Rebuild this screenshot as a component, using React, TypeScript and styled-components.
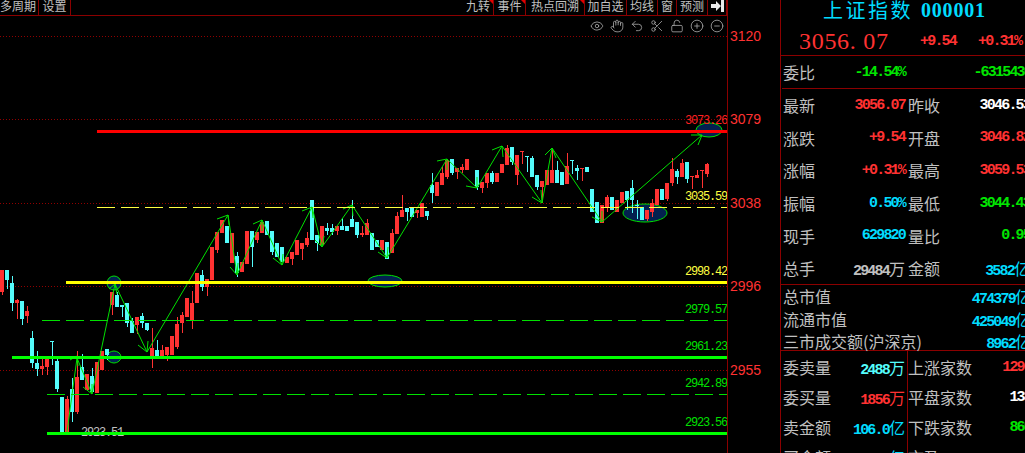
import React, { FC } from 'react';
import styled, { createGlobalStyle } from 'styled-components';
import { CircleMinus, CirclePlus, Eye, Hand, LockOpen, Scissors, Undo2 } from 'lucide-react';

const CJK = '"Noto Sans CJK SC", "Noto Sans", sans-serif';
const RED = '#ff3232';
const GREEN = '#00e600';
const CYAN = '#00dcff';
const AQUA = '#54fcfc';
const GREY = '#c0c0c0';
const LINE = '#8b0000';

const GlobalStyle = createGlobalStyle`
  html, body {
    margin: 0;
    height: 100%;
    background: #000;
    overflow: hidden;
  }
`;

const Page = styled.div`
  display: flex;
  width: 1025px;
  height: 453px;
  background: #000;
  overflow: hidden;
  font-family: ${CJK};
`;

const ChartPane = styled.div`
  position: relative;
  display: flex;
  flex-direction: column;
  width: 727px;
  flex: none;
`;

const Toolbar = styled.div`
  display: flex;
  justify-content: space-between;
  height: 15px;
  flex: none;
  border-bottom: 1px solid ${LINE};
  overflow: hidden;
`;

const ToolGroup = styled.div`
  display: flex;
  &:first-child {
    margin-left: -2px;
  }
`;

const ToolButton = styled.div<{ $width: number; $flag?: boolean }>`
  position: relative;
  width: ${(p) => p.$width}px;
  height: 15px;
  box-sizing: border-box;
  border-right: 1px solid ${LINE};
  display: flex;
  justify-content: center;
  align-items: flex-start;
  color: ${GREY};
  font-size: 12px;
  line-height: 12px;
  white-space: nowrap;
  &::after {
    content: '';
    display: ${(p) => (p.$flag ? 'block' : 'none')};
    position: absolute;
    top: 0;
    right: 0;
    border-top: 4px solid #e00000;
    border-left: 4px solid transparent;
  }
`;

const ExitIcon = styled.svg`
  width: 13px;
  height: 12px;
  display: block;
`;

const ChartSvg = styled.svg`
  display: block;
  width: 727px;
  height: 437px;
  flex: none;
`;

const ChartNote = styled.text`
  fill: #c0c0c0;
  font-family: 'Liberation Mono', monospace;
  font-size: 12px;
  letter-spacing: -1.2px;
`;

const IconRow = styled.div`
  position: absolute;
  top: 19px;
  right: 3px;
  display: flex;
  gap: 6px;
  color: #a8a8a8;
`;

const PriceTag = styled.span<{ $top: number; $left: number; $color: string }>`
  position: absolute;
  top: ${(p) => p.$top}px;
  left: ${(p) => p.$left}px;
  color: ${(p) => p.$color};
  font-family: 'Liberation Mono', monospace;
  font-size: 12px;
  line-height: 12px;
  letter-spacing: -1.2px;
`;

const AxisPane = styled.div`
  position: relative;
  width: 54px;
  flex: none;
  box-sizing: border-box;
  border-left: 1px solid ${LINE};
  border-right: 1px solid ${LINE};
`;

const AxisLabel = styled.span<{ $top: number }>`
  position: absolute;
  left: 2px;
  top: ${(p) => p.$top - 8}px;
  color: ${RED};
  font-family: 'Liberation Sans', sans-serif;
  font-size: 14px;
  line-height: 16px;
`;

const QuotePane = styled.div`
  flex: 1;
  min-width: 0;
  display: flex;
  flex-direction: column;
  overflow: hidden;
`;

const Title = styled.div`
  flex: none;
  height: 19px;
  padding-left: 42px;
  display: flex;
  align-items: center;
  gap: 8px;
  color: ${CYAN};
  font-size: 20px;
  line-height: 20px;
  letter-spacing: 2.5px;
  white-space: nowrap;
`;

const TitleCode = styled.span`
  font-family: 'Liberation Serif', serif;
  font-weight: bold;
  letter-spacing: 0.8px;
`;

const Headline = styled.div`
  flex: none;
  height: 37px;
  box-sizing: border-box;
  padding: 9px 0 0 18px;
  display: flex;
  align-items: center;
  border-bottom: 1px solid ${LINE};
  white-space: nowrap;
`;

const BigPrice = styled.span`
  width: 121px;
  flex: none;
  color: ${RED};
  font-family: 'Liberation Serif', serif;
  font-size: 24px;
  letter-spacing: 0.7px;
`;

const Value = styled.span<{ $color?: string }>`
  color: ${(p) => p.$color ?? GREY};
  font-family: 'Liberation Mono', monospace;
  font-size: 15px;
  font-weight: bold;
  letter-spacing: -1.8px;
  white-space: nowrap;
`;

const HeadDelta = styled(Value)`
  width: 58px;
  flex: none;
`;

const Unit = styled.span`
  font-family: ${CJK};
  font-size: 16px;
  font-weight: 400;
  letter-spacing: 0;
`;

const RatioRow = styled.div`
  flex: none;
  height: 33px;
  box-sizing: border-box;
  margin-left: 1px;
  padding-left: 1px;
  border-bottom: 1px solid ${LINE};
  display: grid;
  grid-template-columns: 122px 123px;
  column-gap: 3px;
  width: 250px;
  align-items: center;
`;

const DataGrid = styled.div`
  flex: none;
  display: grid;
  grid-template-columns: 122px 122px;
  column-gap: 3px;
  grid-auto-rows: 32.6px;
  width: 248px;
  margin-left: 2px;
  align-items: center;
  height: 195px;
`;

const Cell = styled.div`
  display: flex;
  justify-content: space-between;
  align-items: center;
  white-space: nowrap;
  height: 100%;
`;

const Label = styled.span`
  color: ${GREY};
  font-size: 16px;
  line-height: 18px;
`;

const MarketBlock = styled.div`
  flex: none;
  box-sizing: border-box;
  border-top: 1px solid ${LINE};
  border-bottom: 1px solid ${LINE};
  height: 67px;
  display: grid;
  grid-auto-rows: 22.6px;
`;

const MarketRow = styled.div`
  width: 248px;
  padding-left: 2px;
  display: flex;
  justify-content: space-between;
  align-items: center;
`;

const BookBlock = styled.div`
  flex: 1;
  display: grid;
  grid-template-columns: 127px 123px;
  width: 250px;
`;

const BookColumn = styled.div<{ $right?: boolean }>`
  display: grid;
  grid-auto-rows: 30px;
  box-sizing: border-box;
  padding: 1px ${(p) => (p.$right ? 0 : '2px')} 0 ${(p) => (p.$right ? 0 : '2px')};
  border-right: ${(p) => (p.$right ? 'none' : `1px solid ${LINE}`)};
`;

type Candle = [number, number, number, number?, number?, number?];

// x, body top, body bottom, wick top, wick bottom, up(1)/down(0)
const candles: Candle[] = [
  [2, 270, 292, 270, 295, 1], [7, 270, 280, 270, 289, 0], [12, 283, 303, 276, 311, 0], [17, 300, 303, 299, 319, 1],
  [22, 301, 319, 301, 325, 0], [27, 311, 316, 306, 323, 1], [32, 338, 363, 331, 368, 0], [37, 363, 369, 351, 376, 0],
  [42, 366, 369, 359, 375, 1], [47, 358, 367, 356, 375, 1], [52, 341, 342, 341, 365, 0], [57, 361, 389, 357, 392, 0],
  [62, 397, 432, 397, 432, 0], [67, 399, 432, 396, 432, 1], [72, 389, 412, 378, 422, 0], [77, 377, 412, 351, 414, 1],
  [82, 367, 380, 354, 380, 0], [87, 374, 390, 374, 390, 1], [92, 376, 392, 368, 392, 0], [97, 362, 393, 362, 393, 1],
  [102, 351, 370, 351, 370, 1], [107, 349, 355, 349, 360, 0], [112, 292, 305, 292, 315, 1], [117, 295, 307, 292, 307, 0],
  [122, 305, 307, 305, 317, 0], [127, 303, 323, 303, 327, 0], [132, 321, 333, 318, 333, 0], [137, 317, 325, 317, 334, 1],
  [142, 316, 323, 313, 328, 0], [147, 323, 330, 323, 331, 0], [152, 348, 357, 328, 368, 1], [157, 350, 357, 340, 357, 0],
  [162, 350, 357, 345, 357, 1], [167, 347, 355, 347, 361, 1], [172, 336, 355, 336, 355, 1], [177, 324, 347, 317, 349, 1],
  [182, 315, 323, 312, 333, 1], [187, 298, 317, 298, 317, 1], [192, 303, 320, 291, 329, 1], [197, 273, 303, 273, 303, 1],
  [202, 275, 287, 270, 291, 0], [207, 279, 287, 279, 296, 1], [212, 247, 280, 247, 280, 1], [217, 232, 250, 232, 253, 1],
  [222, 220, 233, 220, 233, 1], [227, 226, 243, 226, 243, 0], [232, 233, 263, 233, 263, 1], [237, 256, 273, 252, 277, 0],
  [242, 262, 272, 262, 272, 1], [247, 231, 264, 231, 264, 1], [252, 231, 247, 231, 267, 0], [257, 232, 240, 232, 243, 1],
  [262, 222, 233, 222, 233, 1], [267, 221, 235, 221, 235, 0], [272, 231, 252, 231, 255, 0], [277, 243, 257, 243, 257, 0],
  [282, 247, 262, 247, 262, 0], [287, 257, 263, 257, 263, 1], [292, 252, 259, 252, 265, 1], [297, 240, 255, 240, 255, 1],
  [302, 243, 249, 243, 260, 1], [307, 238, 245, 232, 247, 1], [312, 200, 240, 200, 240, 0], [317, 235, 243, 235, 251, 0],
  [322, 226, 245, 226, 245, 1], [327, 228, 231, 223, 235, 0], [332, 228, 232, 224, 235, 0], [337, 226, 231, 226, 235, 1],
  [342, 226, 230, 218, 230, 0], [347, 226, 231, 226, 231, 0], [352, 219, 227, 200, 227, 0], [357, 222, 235, 222, 238, 0],
  [362, 233, 235, 226, 237, 1], [367, 223, 235, 219, 235, 1], [372, 233, 250, 233, 250, 0], [377, 240, 247, 240, 247, 0],
  [382, 240, 250, 240, 250, 1], [387, 242, 259, 242, 259, 0], [392, 233, 253, 229, 253, 1], [397, 216, 234, 212, 234, 1],
  [402, 210, 217, 195, 217, 1], [407, 208, 212, 208, 221, 0], [412, 208, 217, 208, 217, 0], [417, 210, 213, 210, 218, 1],
  [422, 203, 217, 203, 217, 1], [427, 211, 216, 211, 220, 0], [432, 185, 193, 173, 203, 0], [437, 182, 196, 182, 196, 1],
  [442, 173, 185, 167, 185, 1], [447, 160, 177, 160, 179, 1], [452, 159, 173, 159, 175, 0], [457, 168, 172, 168, 179, 1],
  [462, 167, 170, 164, 173, 1], [467, 159, 170, 159, 170, 1], [477, 170, 187, 170, 190, 0], [482, 182, 188, 182, 193, 1],
  [487, 173, 183, 173, 188, 1], [492, 173, 182, 171, 184, 0], [497, 173, 182, 173, 182, 1], [502, 164, 173, 164, 173, 1],
  [507, 148, 165, 145, 165, 1], [512, 147, 162, 147, 165, 0], [517, 155, 175, 155, 185, 1], [522, 151, 152, 151, 164, 1],
  [527, 156, 157, 156, 172, 0], [532, 158, 177, 156, 177, 0], [537, 175, 187, 175, 190, 0], [542, 181, 187, 181, 203, 1],
  [547, 170, 185, 170, 185, 1], [552, 170, 183, 148, 183, 1], [557, 170, 183, 161, 183, 0], [562, 172, 185, 172, 185, 0],
  [567, 166, 184, 153, 184, 1], [572, 160, 161, 160, 174, 0], [577, 168, 171, 165, 180, 0], [582, 168, 169, 168, 181, 1],
  [587, 167, 172, 167, 172, 0], [592, 189, 212, 189, 212, 0], [597, 202, 223, 202, 223, 0], [602, 205, 223, 205, 223, 1],
  [607, 197, 208, 195, 212, 1], [612, 197, 210, 197, 210, 0], [617, 200, 212, 200, 212, 1], [622, 192, 203, 192, 203, 1],
  [627, 191, 200, 191, 210, 0], [632, 188, 200, 180, 213, 0], [637, 205, 206, 200, 219, 0], [642, 207, 220, 207, 220, 0],
  [647, 210, 219, 210, 221, 1], [652, 203, 212, 199, 217, 1], [657, 189, 205, 189, 205, 1], [662, 189, 200, 189, 200, 0],
  [667, 183, 199, 183, 201, 1], [672, 169, 183, 158, 186, 1], [677, 171, 177, 169, 184, 0], [682, 163, 177, 159, 177, 1],
  [687, 162, 179, 162, 183, 0], [692, 176, 177, 176, 189, 1], [697, 175, 178, 170, 178, 1], [702, 170, 171, 170, 188, 1],
  [707, 164, 174, 163, 177, 1],
];

const zigzag: [number, number][] = [
  [67, 432], [77, 358], [92, 394], [115, 284], [147, 352], [228, 215], [237, 275], [262, 220], [282, 265],
  [312, 207], [322, 247], [352, 205], [387, 258], [447, 159], [477, 188], [502, 146], [542, 203], [552, 148],
  [602, 222], [702, 135],
];

const barbs = [
  'M70 360 L77 356 L78 366', 'M83 387 L92 394 L92 384', 'M109 289 L115 284 L117 294', 'M138 345 L147 352 L148 341',
  'M217 219 L228 215 L229 225', 'M230 267 L237 275 L238 263', 'M253 224 L262 220 L262 231', 'M273 258 L282 265 L283 254',
  'M302 211 L312 207 L313 218', 'M315 240 L322 247 L324 236', 'M343 209 L352 205 L353 216', 'M378 252 L387 258 L388 247',
  'M437 161 L447 159 L447 170', 'M466 186 L477 188 L477 177', 'M492 150 L502 146 L503 157', 'M532 197 L542 203 L541 190',
  'M545 155 L552 148 L556 158', 'M592 217 L602 222 L602 211', 'M691 135 L702 135 L698 145',
];

const dottedLines = [36, 119, 203, 286, 370];

const Chart: FC = () => (
  <ChartSvg viewBox="0 16 727 437">
    {dottedLines.map((y) => (
      <line key={y} x1="0" x2="727" y1={y + 0.5} y2={y + 0.5} stroke="#900000" strokeDasharray="1 2" />
    ))}
    <g fill="#03204f" stroke="#00e000">
      <ellipse cx="114" cy="283" rx="7" ry="7" />
      <ellipse cx="114" cy="357" rx="7" ry="6" />
      <ellipse cx="385" cy="281" rx="17" ry="6" />
      <ellipse cx="645" cy="213" rx="22" ry="9" />
      <ellipse cx="709" cy="130" rx="13" ry="7" />
    </g>
    {candles.map(([x, top, bottom, wickTop = top, wickBottom = bottom, up]) => {
      const color = up ? '#ff3232' : '#54fcfc';
      return (
        <g key={x} fill={color}>
          <rect x={x} y={wickTop} width="1" height={wickBottom - wickTop} />
          <rect x={x - 2} y={top} width="4" height={bottom - top} />
        </g>
      );
    })}
    <g fill="none" stroke="#00e000" strokeWidth="1">
      <polyline points={zigzag.map(([x, y]) => `${x},${y}`).join(' ')} />
      {barbs.map((d) => (
        <path key={d} d={d} />
      ))}
    </g>
    <ChartNote x="81" y="436">2923.51</ChartNote>
    <rect x="97" y="130" width="630" height="3" fill="#ff0000" />
    <rect x="66" y="281" width="661" height="3" fill="#ffff00" />
    <rect x="12" y="356" width="715" height="3" fill="#00ff00" />
    <rect x="47" y="432" width="680" height="3" fill="#00ff00" />
    <line x1="97" x2="727" y1="207.5" y2="207.5" stroke="#ffff40" strokeDasharray="18 6" />
    <line x1="42" x2="727" y1="320.5" y2="320.5" stroke="#00e000" strokeDasharray="18 6" />
    <line x1="47" x2="727" y1="394.5" y2="394.5" stroke="#00e000" strokeDasharray="18 6" />
  </ChartSvg>
);

const tags: [string, number, number, string][] = [
  ['3073.26', 115, 685, '#ff2020'],
  ['3035.59', 191, 685, '#ffff40'],
  ['2998.42', 266, 685, '#ffff40'],
  ['2979.57', 304, 685, '#00e000'],
  ['2961.23', 341, 685, '#00e000'],
  ['2942.89', 378, 685, '#00e000'],
  ['2923.56', 417, 685, '#00e000'],
];

const stats: [string, string, string, string, string, string][] = [
  ['最新', '3056.07', RED, '昨收', '3046.53', '#ffffff'],
  ['涨跌', '+9.54', RED, '开盘', '3046.82', RED],
  ['涨幅', '+0.31%', RED, '最高', '3059.53', RED],
  ['振幅', '0.50%', CYAN, '最低', '3044.43', GREEN],
  ['现手', '629820', CYAN, '量比', '0.95', GREEN],
];

const App: FC = () => (
  <Page>
    <GlobalStyle />
    <ChartPane>
      <Toolbar>
        <ToolGroup>
          <ToolButton $width={41}>多周期</ToolButton>
          <ToolButton $width={32}>设置</ToolButton>
        </ToolGroup>
        <ToolGroup>
          <ToolButton $width={31} $flag>九转</ToolButton>
          <ToolButton $width={32} $flag>事件</ToolButton>
          <ToolButton $width={59} $flag>热点回溯</ToolButton>
          <ToolButton $width={42}>加自选</ToolButton>
          <ToolButton $width={31}>均线</ToolButton>
          <ToolButton $width={19}>窗</ToolButton>
          <ToolButton $width={31}>预测</ToolButton>
          <ToolButton $width={19}>
            <ExitIcon viewBox="0 0 13 12">
              <path d="M0 4 H5 V1 L10 6 L5 11 V8 H0 Z" fill="#e8e8e8" />
              <rect x="10" y="0" width="3" height="12" fill="#e8e8e8" />
            </ExitIcon>
          </ToolButton>
        </ToolGroup>
      </Toolbar>
      <Chart />
      <IconRow>
        <Eye size={14} strokeWidth={1.4} />
        <Hand size={14} strokeWidth={1.4} />
        <Undo2 size={14} strokeWidth={1.4} />
        <Scissors size={14} strokeWidth={1.4} />
        <LockOpen size={14} strokeWidth={1.4} />
        <CirclePlus size={14} strokeWidth={1.4} />
        <CircleMinus size={14} strokeWidth={1.4} />
      </IconRow>
      {tags.map(([text, top, left, color]) => (
        <PriceTag key={text} $top={top} $left={left} $color={color}>
          {text}
        </PriceTag>
      ))}
    </ChartPane>
    <AxisPane>
      <AxisLabel $top={36}>3120</AxisLabel>
      <AxisLabel $top={119}>3079</AxisLabel>
      <AxisLabel $top={203}>3038</AxisLabel>
      <AxisLabel $top={286}>2996</AxisLabel>
      <AxisLabel $top={370}>2955</AxisLabel>
    </AxisPane>
    <QuotePane>
      <Title>
        <span>上证指数</span>
        <TitleCode>000001</TitleCode>
      </Title>
      <Headline>
        <BigPrice>3056. 07</BigPrice>
        <HeadDelta $color={RED}>+9.54</HeadDelta>
        <Value $color={RED}>+0.31%</Value>
      </Headline>
      <RatioRow>
        <Cell>
          <Label>委比</Label>
          <Value $color={GREEN}>-14.54%</Value>
        </Cell>
        <Cell>
          <span />
          <Value $color={GREEN}>-6315430</Value>
        </Cell>
      </RatioRow>
      <DataGrid>
        {stats.map(([l1, v1, c1, l2, v2, c2]) => (
          <React.Fragment key={l1}>
            <Cell>
              <Label>{l1}</Label>
              <Value $color={c1}>{v1}</Value>
            </Cell>
            <Cell>
              <Label>{l2}</Label>
              <Value $color={c2}>{v2}</Value>
            </Cell>
          </React.Fragment>
        ))}
        <Cell>
          <Label>总手</Label>
          <Value>29484<Unit>万</Unit></Value>
        </Cell>
        <Cell>
          <Label>金额</Label>
          <Value $color={CYAN}>3582<Unit>亿</Unit></Value>
        </Cell>
      </DataGrid>
      <MarketBlock>
        <MarketRow>
          <Label>总市值</Label>
          <Value $color={CYAN}>474379<Unit>亿</Unit></Value>
        </MarketRow>
        <MarketRow>
          <Label>流通市值</Label>
          <Value $color={CYAN}>425049<Unit>亿</Unit></Value>
        </MarketRow>
        <MarketRow>
          <Label>三市成交额(沪深京)</Label>
          <Value $color={CYAN}>8962<Unit>亿</Unit></Value>
        </MarketRow>
      </MarketBlock>
      <BookBlock>
        <BookColumn>
          <Cell>
            <Label>委卖量</Label>
            <Value $color={AQUA}>2488<Unit>万</Unit></Value>
          </Cell>
          <Cell>
            <Label>委买量</Label>
            <Value $color={RED}>1856<Unit>万</Unit></Value>
          </Cell>
          <Cell>
            <Label>卖金额</Label>
            <Value $color={CYAN}>106.0<Unit>亿</Unit></Value>
          </Cell>
          <Cell>
            <Label>买金额</Label>
            <Value $color={CYAN}>80.71<Unit>亿</Unit></Value>
          </Cell>
        </BookColumn>
        <BookColumn $right>
          <Cell>
            <Label>上涨家数</Label>
            <Value $color={RED}>1296</Value>
          </Cell>
          <Cell>
            <Label>平盘家数</Label>
            <Value $color="#ffffff">138</Value>
          </Cell>
          <Cell>
            <Label>下跌家数</Label>
            <Value $color={GREEN}>860</Value>
          </Cell>
          <Cell>
            <Label>市盈</Label>
            <Value>0</Value>
          </Cell>
        </BookColumn>
      </BookBlock>
    </QuotePane>
  </Page>
);

export default App;
